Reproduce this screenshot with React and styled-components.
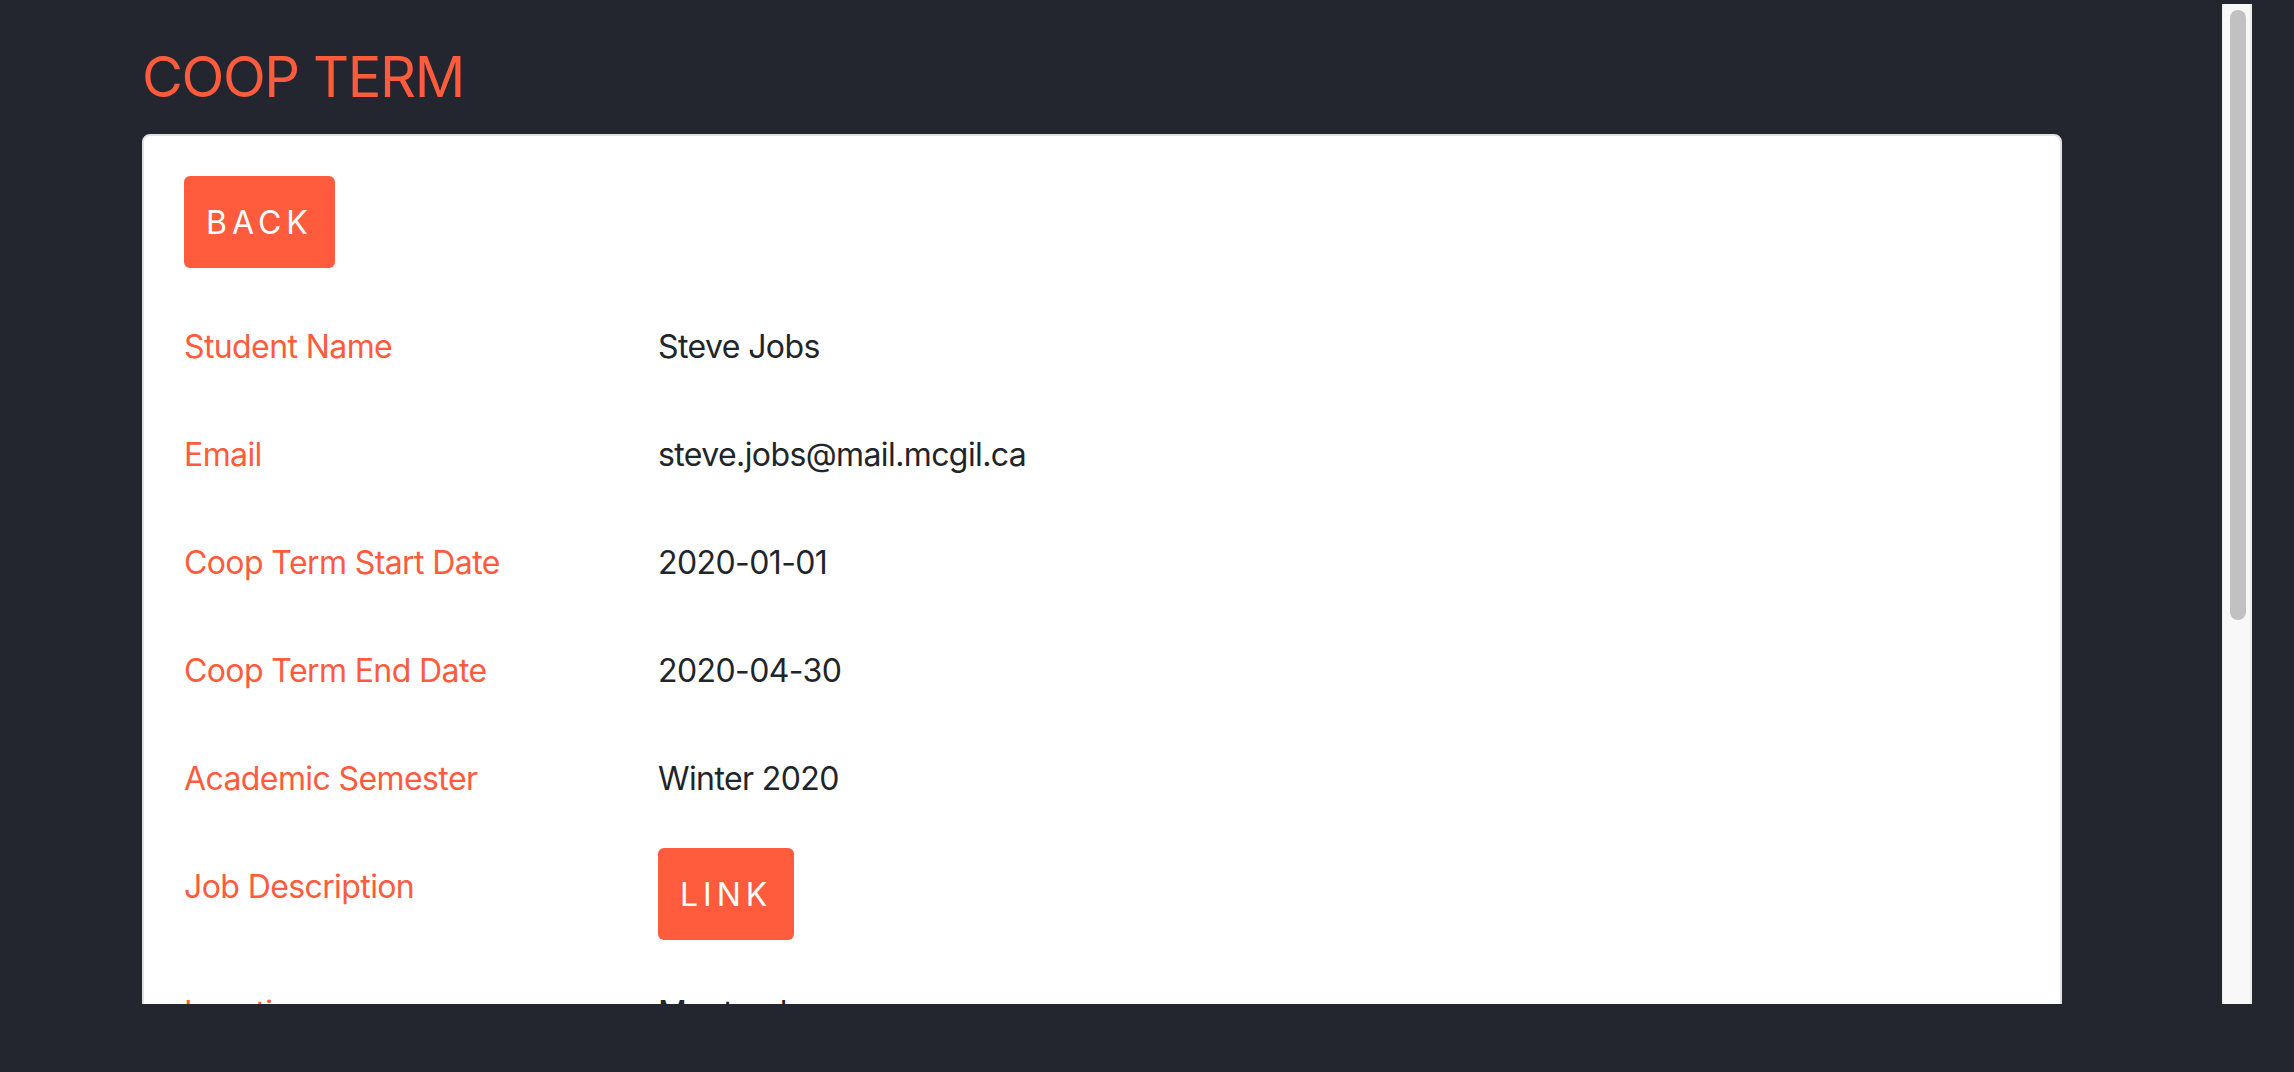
import React from "react";
import styled, { createGlobalStyle } from "styled-components";

const accent = "#ff5b3c";

const GlobalStyle = createGlobalStyle`
   html, body {
      margin: 0;
      padding: 0;
      background: #23252f;
      font-family: Inter, "Noto Sans", "Liberation Sans", sans-serif;
   }
`;

const rows = [
   { label: "Student Name", value: "Steve Jobs" },
   { label: "Email", value: "steve.jobs@mail.mcgil.ca" },
   { label: "Coop Term Start Date", value: "2020-01-01" },
   { label: "Coop Term End Date", value: "2020-04-30" },
   { label: "Academic Semester", value: "Winter 2020" },
   { label: "Job Description", link: true },
   { label: "Location", value: "Montreal" },
];

const App = () => (
   <>
      <GlobalStyle />
      <Page>
         <Viewport>
            <Content>
               <Title>COOP TERM</Title>
               <Card>
                  <Button>BACK</Button>
                  <List>
                     {rows.map(row => (
                        <Row key={row.label}>
                           <Label>{row.label}</Label>
                           {row.link ? (
                              <Button inline>LINK</Button>
                           ) : (
                              <Value>{row.value}</Value>
                           )}
                        </Row>
                     ))}
                  </List>
               </Card>
            </Content>
            <Track>
               <Thumb />
            </Track>
         </Viewport>
      </Page>
   </>
);

const Page = styled.div`
   padding-top: 4px;
   height: 1072px;
   box-sizing: border-box;
   overflow: hidden;
`;

const Viewport = styled.div`
   display: flex;
   width: 2252px;
   height: 1000px;
`;

const Content = styled.div`
   flex: 1;
   overflow: hidden;
   padding: 40px 0 0 142px;
`;

const Track = styled.div`
   width: 30px;
   flex-shrink: 0;
   background: #f8f8f8;
   box-shadow: inset 1px 0 0 #ececec, inset -2px 0 0 #ececec;
   padding: 6px 6px 0 8px;
   box-sizing: border-box;
`;

const Thumb = styled.div`
   height: 610px;
   border-radius: 8px;
   background: #c1c1c1;
`;

const Title = styled.h1`
   margin: 0 0 23px;
   font-size: 56px;
   line-height: 67px;
   font-weight: 400;
   color: ${accent};
   letter-spacing: -1.4px;
`;

const Card = styled.div`
   width: 1920px;
   box-sizing: border-box;
   background: #fff;
   border: 2px solid #e2e2e2;
   border-radius: 8px;
   padding: 40px;
`;

const Button = styled.button`
   display: block;
   justify-self: start;
   height: 92px;
   margin: ${({ inline }) => (inline ? "-15px 0 3px" : "0")};
   padding: 0 22px;
   border: none;
   border-radius: 6px;
   background: ${accent};
   color: #fff;
   font-family: inherit;
   font-size: 32px;
   font-weight: 400;
   letter-spacing: 5px;
   cursor: pointer;
`;

const List = styled.div`
   display: flex;
   flex-direction: column;
   gap: 46px;
   margin-top: 55px;
`;

const Row = styled.div`
   display: grid;
   grid-template-columns: 474px 1fr;
   align-items: start;
   min-height: 62px;
`;

const Label = styled.div`
   font-size: 32px;
   line-height: 48px;
   color: ${accent};
   letter-spacing: -0.6px;
`;

const Value = styled.div`
   font-size: 32px;
   line-height: 48px;
   color: #212529;
   letter-spacing: -0.6px;
`;

export default App;
